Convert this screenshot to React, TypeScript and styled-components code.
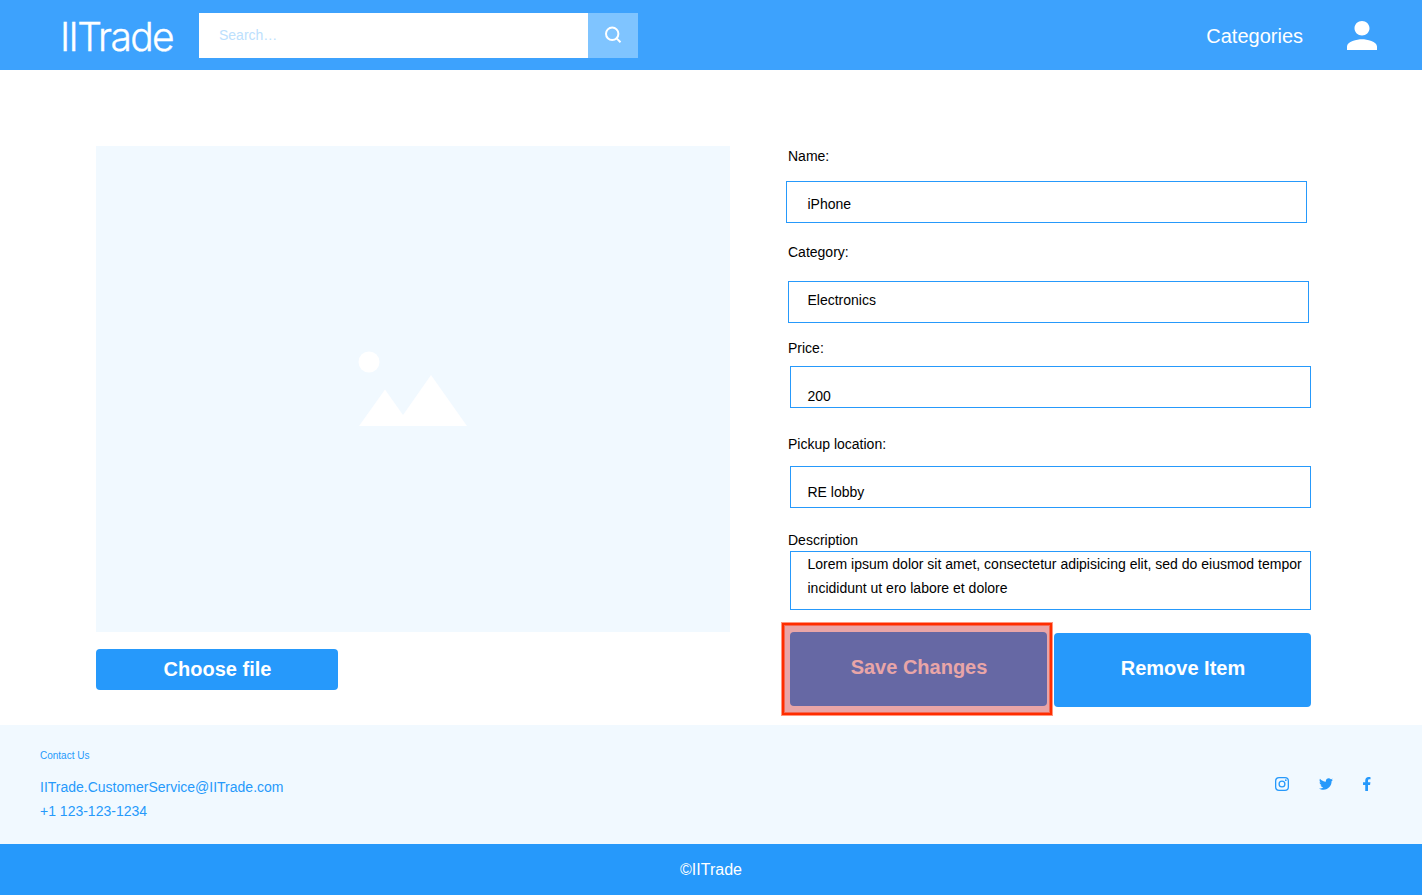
import React from "react";
import styled, { createGlobalStyle } from "styled-components";
import { FaTwitter } from "react-icons/fa";

const blue = "#2699fb";
const pale = "#f1f9ff";

const GlobalStyle = createGlobalStyle`
  *, *::before, *::after { box-sizing: border-box; }
  body {
    margin: 0;
    background: #fff;
    color: #000;
    font: 14px/24px "Liberation Sans", Arial, sans-serif;
  }
`;

const Page = styled.div`
  width: 1422px;
  height: 895px;
  display: flex;
  flex-direction: column;
  overflow: hidden;
`;

const Header = styled.header`
  height: 70px;
  flex: none;
  display: flex;
  align-items: center;
  padding: 0 45px 0 60px;
  background: #3da2fd;
  color: #fff;
`;

const Logo = styled.div`
  width: 139px;
  padding-top: 3px;
  font: 300 39px/48px Inter, sans-serif;
  letter-spacing: -1.65px;
  -webkit-text-stroke: 0.35px #fff;
  white-space: nowrap;
`;

const Search = styled.div`
  display: flex;
  width: 439px;
  height: 45px;
`;

const SearchField = styled.div`
  flex: 1;
  padding-left: 20px;
  line-height: 45px;
  background: #fff;
  color: #bce0fd;
`;

const SearchButton = styled.button`
  width: 50px;
  height: 45px;
  padding: 0;
  border: 0;
  background: #7fc4ff;
  display: flex;
  align-items: center;
  justify-content: center;
`;

const NavLink = styled.a`
  margin-left: auto;
  margin-right: 44px;
  padding-top: 2px;
  font-size: 20px;
`;

const Main = styled.main`
  flex: 1;
  display: flex;
  align-items: flex-start;
  padding: 74px 111px 0 96px;
`;

const Media = styled.section`
  width: 634px;
  padding-top: 2px;
  margin-right: 58px;
`;

const Placeholder = styled.div`
  height: 486px;
  margin-bottom: 17px;
  padding: 0 0 0 262px;
  display: flex;
  align-items: center;
  background: ${pale};
`;

const Button = styled.button<{ $w: number; $h: number; $drop?: number; $lift: number }>`
  width: ${(p) => p.$w}px;
  height: ${(p) => p.$h}px;
  margin: ${(p) => p.$drop ?? 0}px 0 0;
  padding: 0 0 ${(p) => p.$lift}px 1px;
  border: 0;
  border-radius: 4px;
  background: ${blue};
  color: #fff;
  font: bold 20px/24px "Liberation Sans", Arial, sans-serif;
`;

const Form = styled.section`
  width: 523px;
`;

const Field = styled.div`
  height: 96px;
`;

const Label = styled.label`
  display: block;
  height: 24px;
`;

const Input = styled.div<{ $gap: number; $shift: number; $top: number; $h?: number }>`
  width: 521px;
  height: ${(p) => p.$h ?? 42}px;
  margin-top: ${(p) => p.$gap}px;
  margin-left: ${(p) => p.$shift}px;
  padding-top: ${(p) => p.$top}px;
  padding-left: ${(p) => 18.5 - p.$shift}px;
  border: 1px solid ${blue};
  white-space: nowrap;
`;

const Actions = styled.div`
  display: flex;
  align-items: flex-start;
  justify-content: space-between;
  padding: 8px 0 0 2px;
`;

const Highlighted = styled.div`
  position: relative;
  display: flex;
`;

const Highlight = styled.div`
  position: absolute;
  left: -8px;
  top: -9px;
  width: 270px;
  height: 92px;
  border: 2px solid #ff2d00;
  background: rgba(200, 30, 35, 0.4);
  background-clip: padding-box;
  box-shadow: 0 0 0 1px rgba(255, 45, 0, 0.5), inset 0 0 0 1px rgba(255, 45, 0, 0.5);
`;

const Footer = styled.footer`
  height: 119px;
  flex: none;
  display: flex;
  justify-content: space-between;
  padding: 19px 51px 0 40px;
  background: ${pale};
  color: ${blue};
`;

const ContactTitle = styled.div`
  font-size: 10px;
  margin-bottom: 7px;
`;

const Socials = styled.div`
  display: flex;
  align-items: center;
  height: 14px;
  margin-top: 33px;
  gap: 30px;
`;

const Copyright = styled.div`
  height: 51px;
  flex: none;
  background: ${blue};
  color: #fff;
  font-size: 16px;
  line-height: 51px;
  text-align: center;
`;

const fields = [
  { label: "Name:", value: "iPhone", gap: 13, shift: -2, top: 10 },
  { label: "Category:", value: "Electronics", gap: 17, shift: 0, top: 6 },
  { label: "Price:", value: "200", gap: 6, shift: 2, top: 17 },
  { label: "Pickup location:", value: "RE lobby", gap: 10, shift: 2, top: 13 },
];

export default function App() {
  return (
    <>
      <GlobalStyle />
      <Page>
        <Header>
          <Logo>IITrade</Logo>
          <Search>
            <SearchField>Search…</SearchField>
            <SearchButton aria-label="Search">
              <svg width="18" height="19" viewBox="0 0 18 19" fill="none" stroke="#fff" strokeWidth="2">
                <circle cx="8.2" cy="7.8" r="6.2" />
                <path d="M12.4 12.1 16.5 16.3" />
              </svg>
            </SearchButton>
          </Search>
          <NavLink>Categories</NavLink>
          <svg width="30" height="29" viewBox="4 4 16 16" preserveAspectRatio="none" fill="#fff">
            <path d="M12 12c2.21 0 4-1.79 4-4s-1.79-4-4-4-4 1.79-4 4 1.79 4 4 4zm0 2c-2.67 0-8 1.34-8 4v2h16v-2c0-2.66-5.33-4-8-4z" />
          </svg>
        </Header>

        <Main>
          <Media>
            <Placeholder>
              <svg width="110" height="76" viewBox="0 0 110 76" fill="#fff">
                <circle cx="11" cy="11" r="10.5" />
                <path d="M1 75 27 38.5 45 64 73 24 109 75Z" />
              </svg>
            </Placeholder>
            <Button $w={242} $h={41} $lift={2}>Choose file</Button>
          </Media>

          <Form>
            {fields.map((f) => (
              <Field key={f.label}>
                <Label>{f.label}</Label>
                <Input $gap={f.gap} $shift={f.shift} $top={f.top}>{f.value}</Input>
              </Field>
            ))}
            <Field>
              <Label>Description</Label>
              <Input $gap={-1} $shift={2} $top={0} $h={59}>
                Lorem ipsum dolor sit amet, consectetur adipisicing elit, sed do eiusmod tempor
                <br />
                incididunt ut ero labore et dolore
              </Input>
            </Field>
            <Actions>
              <Highlighted>
                <Button $w={257} $h={74} $lift={4}>Save Changes</Button>
                <Highlight />
              </Highlighted>
              <Button $w={257} $h={74} $lift={4} $drop={1}>Remove Item</Button>
            </Actions>
          </Form>
        </Main>

        <Footer>
          <div>
            <ContactTitle>Contact Us</ContactTitle>
            <div>IITrade.CustomerService@IITrade.com</div>
            <div>+1 123-123-1234</div>
          </div>
          <Socials>
            <svg width="14" height="14" viewBox="0 0 14 14" fill="none" stroke={blue} strokeWidth="1.3">
              <rect x="0.65" y="0.65" width="12.7" height="12.7" rx="3.4" />
              <circle cx="7" cy="7" r="2.9" />
              <circle cx="10.8" cy="3.2" r="0.85" fill={blue} stroke="none" />
            </svg>
            <FaTwitter size={14} />
            <svg width="8" height="14" viewBox="22 0 275 512" preserveAspectRatio="xMinYMid meet" fill={blue}>
              <path d="M279.14 288l14.22-92.66h-88.91v-60.13c0-25.35 12.42-50.06 52.24-50.06h40.42V6.26S260.43 0 225.36 0c-73.22 0-121.08 44.38-121.08 124.72v70.62H22.89V288h81.39v224h100.17V288z" />
            </svg>
          </Socials>
        </Footer>
        <Copyright>©IITrade</Copyright>
      </Page>
    </>
  );
}
